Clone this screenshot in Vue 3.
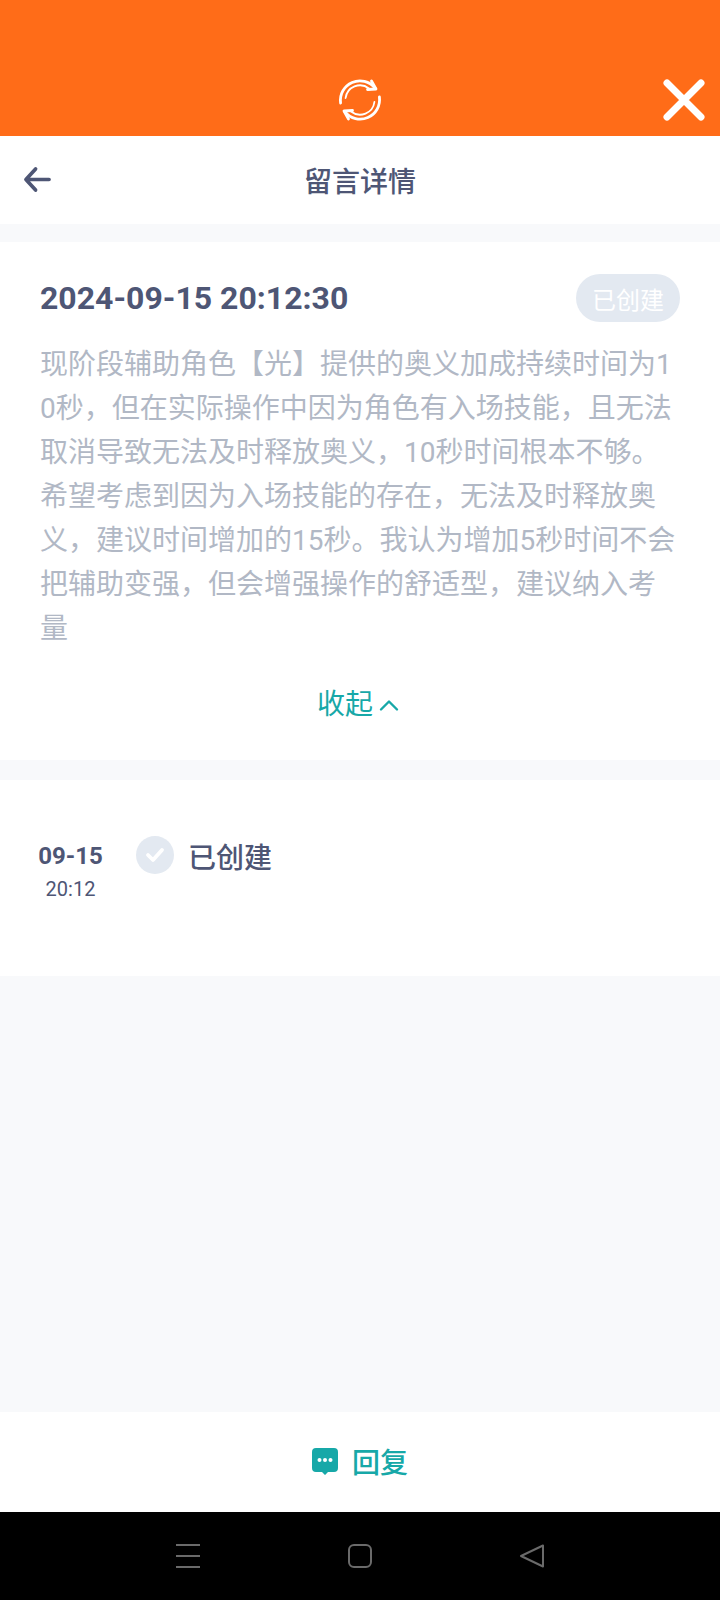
<template>
  <div class="page">
    <header class="top-bar">
      <svg class="refresh" viewBox="0 0 44 44" fill="none" stroke="#fff" stroke-linecap="round">
        <path d="M37 10A19.5 19.5 0 0 0 2.6 25" stroke-width="2.8" />
        <path d="M7 34A19.5 19.5 0 0 0 41.4 19" stroke-width="2.8" />
        <path d="M31 10.5A14.5 14.5 0 0 0 7.6 20" stroke-width="1.8" />
        <path d="M13 33.5A14.5 14.5 0 0 0 36.4 24" stroke-width="1.8" />
        <path d="M33.5 3L38 11L29.5 11.5" stroke-width="2.8" stroke-linejoin="round" />
        <path d="M10.5 41L6 33L14.5 32.5" stroke-width="2.8" stroke-linejoin="round" />
      </svg>
      <svg class="close" viewBox="0 0 44 44" stroke="#fff" stroke-width="7" stroke-linecap="round">
        <path d="M5 5L39 39M39 5L5 39" />
      </svg>
    </header>

    <nav class="nav">
      <svg class="back" viewBox="0 0 30 28" fill="none" stroke="#4e5675" stroke-width="3.8" stroke-linecap="round" stroke-linejoin="round">
        <path d="M13 3L3 14L13 25M4 14H27" />
      </svg>
      <h1>留言详情</h1>
    </nav>

    <section class="card">
      <div class="card-head">
        <span class="time">2024-09-15 20:12:30</span>
        <span class="status">已创建</span>
      </div>
      <p class="content">{{ content }}</p>
      <div class="fold">
        收起
        <svg viewBox="0 0 20 12" fill="none" stroke="#17a8a8" stroke-width="2.4" stroke-linecap="round" stroke-linejoin="round">
          <path d="M2 10L10 2L18 10" />
        </svg>
      </div>
    </section>

    <section class="timeline">
      <div class="date">
        <strong>09-15</strong>
        <span>20:12</span>
      </div>
      <span class="dot">
        <svg viewBox="0 0 20 16" fill="none" stroke="#fff" stroke-width="3.8" stroke-linecap="round" stroke-linejoin="round">
          <path d="M3 8L8 13L17 3" />
        </svg>
      </span>
      <span class="step">已创建</span>
    </section>

    <div class="spacer"></div>

    <footer class="reply">
      <svg viewBox="0 0 26 27" class="reply-icon">
        <path d="M4 0H22A4 4 0 0 1 26 4V20A4 4 0 0 1 22 24H16L13 27L10 24H4A4 4 0 0 1 0 20V4A4 4 0 0 1 4 0Z" fill="#17a8a8" />
        <circle cx="7.5" cy="12" r="2" fill="#fff" />
        <circle cx="13" cy="12" r="2" fill="#fff" />
        <circle cx="18.5" cy="12" r="2" fill="#fff" />
      </svg>
      <span>回复</span>
    </footer>

    <div class="sys-bar">
      <svg class="sys-menu" viewBox="0 0 24 24" stroke="#6a6a6a" stroke-width="2">
        <path d="M0 1H24M0 12H24M0 23H24" />
      </svg>
      <svg class="sys-home" viewBox="0 0 24 24" fill="none" stroke="#6a6a6a" stroke-width="2">
        <rect x="1" y="1" width="22" height="22" rx="5" />
      </svg>
      <svg class="sys-back" viewBox="0 0 24 24" fill="none" stroke="#6a6a6a" stroke-width="2" stroke-linejoin="round">
        <path d="M23 1.5V22.5L1 12Z" />
      </svg>
    </div>
  </div>
</template>

<script setup>
const content =
  '现阶段辅助角色【光】提供的奥义加成持续时间为10秒，但在实际操作中因为角色有入场技能，且无法取消导致无法及时释放奥义，10秒时间根本不够。希望考虑到因为入场技能的存在，无法及时释放奥义，建议时间增加的15秒。我认为增加5秒时间不会把辅助变强，但会增强操作的舒适型，建议纳入考量'
</script>

<style>
body {
  background: #f8f9fb;
}
</style>

<style scoped>
.page {
  width: 720px;
  height: 1600px;
  display: flex;
  flex-direction: column;
  background: #f8f9fb;
  font-family: Roboto, "Noto Sans CJK SC", sans-serif;
  overflow: hidden;
}

.top-bar {
  height: 136px;
  flex: none;
  background: #ff6c18;
  position: relative;
}

.refresh {
  position: absolute;
  left: 338px;
  top: 78px;
  width: 44px;
  height: 44px;
}

.close {
  position: absolute;
  left: 662px;
  top: 78px;
  width: 44px;
  height: 44px;
}

.nav {
  height: 88px;
  flex: none;
  background: #fff;
  display: flex;
  align-items: center;
  justify-content: center;
  position: relative;
}

.nav h1 {
  margin: 0;
  font-size: 28px;
  font-weight: 500;
  color: #4e5675;
}

.back {
  position: absolute;
  left: 23px;
  top: 30px;
  width: 29px;
  height: 27px;
}

.card {
  flex: none;
  height: 518px;
  box-sizing: border-box;
  margin-top: 18px;
  padding: 32px 40px 0 40px;
  background: #fff;
}

.card-head {
  display: flex;
  justify-content: space-between;
  align-items: center;
}

.time {
  font-size: 32px;
  font-weight: 700;
  color: #4e5675;
}

.status {
  width: 104px;
  height: 48px;
  border-radius: 24px;
  background: #e3e9f1;
  color: #fff;
  font-size: 24px;
  display: flex;
  align-items: center;
  justify-content: center;
}

.content {
  margin: 21px 0 0;
  font-size: 28px;
  line-height: 44px;
  color: #b1b8c5;
  word-break: break-all;
}

.fold {
  margin-top: 34px;
  padding-right: 4px;
  display: flex;
  justify-content: center;
  align-items: center;
  gap: 6px;
  font-size: 28px;
  line-height: 40px;
  color: #17a8a8;
}

.fold svg {
  width: 20px;
  height: 13px;
}

.timeline {
  flex: none;
  height: 196px;
  box-sizing: border-box;
  margin-top: 20px;
  padding: 56px 0 0 38px;
  background: #fff;
  display: flex;
  align-items: flex-start;
}

.date {
  width: 65px;
  padding-top: 4px;
  display: flex;
  flex-direction: column;
  align-items: center;
  color: #4e5675;
}

.date strong {
  font-size: 24px;
  line-height: 32px;
  font-weight: 700;
}

.date span {
  font-size: 20px;
  line-height: 30px;
  margin-top: 2px;
}

.dot {
  width: 38px;
  height: 38px;
  margin: 0 0 0 33px;
  border-radius: 50%;
  background: #e3e9f1;
  display: flex;
  align-items: center;
  justify-content: center;
}

.dot svg {
  width: 20px;
  height: 16px;
}

.step {
  margin-left: 14px;
  margin-top: 4px;
  font-size: 28px;
  font-weight: 500;
  line-height: 38px;
  color: #4e5675;
}

.spacer {
  flex: 1;
}

.reply {
  flex: none;
  height: 100px;
  padding-bottom: 2px;
  box-sizing: border-box;
  background: #fff;
  display: flex;
  align-items: center;
  justify-content: center;
  gap: 14px;
  font-size: 28px;
  font-weight: 500;
  color: #17a8a8;
}

.reply-icon {
  width: 26px;
  height: 27px;
}

.sys-bar {
  flex: none;
  height: 88px;
  background: #000;
  position: relative;
}

.sys-bar svg {
  position: absolute;
  top: 32px;
  width: 24px;
  height: 24px;
}

.sys-menu {
  left: 176px;
}

.sys-home {
  left: 348px;
}

.sys-back {
  left: 520px;
}
</style>
